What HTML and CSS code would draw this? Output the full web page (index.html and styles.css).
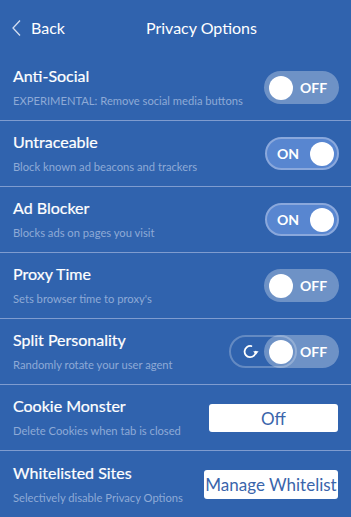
FILE: index.html
```html
<!DOCTYPE html>
<html>
<head>
<meta charset="utf-8">
<link rel="stylesheet" href="styles.css">
</head>
<body>
<div class="page">
  <header class="header">
    <svg class="chevron" width="9" height="16" viewBox="0 0 9 16"><polyline points="8,0.5 1,8 8,15.5" fill="none" stroke="#d3def0" stroke-width="1.3"/></svg>
    <span class="back">Back</span>
    <span class="header-title">Privacy Options</span>
  </header>

  <div class="row">
    <div class="info">
      <div class="title">Anti-Social</div>
      <div class="sub">EXPERIMENTAL: Remove social media buttons</div>
    </div>
    <div class="toggle off"><span class="knob"></span><span class="label">OFF</span></div>
  </div>

  <div class="row">
    <div class="info">
      <div class="title">Untraceable</div>
      <div class="sub">Block known ad beacons and trackers</div>
    </div>
    <div class="toggle on"><span class="label">ON</span><span class="knob"></span></div>
  </div>

  <div class="row">
    <div class="info">
      <div class="title">Ad Blocker</div>
      <div class="sub">Blocks ads on pages you visit</div>
    </div>
    <div class="toggle on"><span class="label">ON</span><span class="knob"></span></div>
  </div>

  <div class="row">
    <div class="info">
      <div class="title">Proxy Time</div>
      <div class="sub">Sets browser time to proxy's</div>
    </div>
    <div class="toggle off"><span class="knob"></span><span class="label">OFF</span></div>
  </div>

  <div class="row">
    <div class="info">
      <div class="title">Split Personality</div>
      <div class="sub">Randomly rotate your user agent</div>
    </div>
    <div class="toggle off split">
      <span class="split-ring">
        <svg class="rotate" width="16" height="15" viewBox="0 0 16 15">
          <path d="M8.4 2.1 A5.6 5.6 0 1 0 12.8 7.6" fill="none" stroke="#fff" stroke-width="1.8" stroke-linecap="round"/>
          <polygon points="10.2,7.2 15.6,7.2 12.9,10.8" fill="#fff"/>
        </svg>
      </span>
      <span class="knob"></span><span class="label">OFF</span>
    </div>
  </div>

  <div class="row">
    <div class="info">
      <div class="title">Cookie Monster</div>
      <div class="sub">Delete Cookies when tab is closed</div>
    </div>
    <button class="btn btn-off">Off</button>
  </div>

  <div class="row last">
    <div class="info">
      <div class="title">Whitelisted Sites</div>
      <div class="sub">Selectively disable Privacy Options</div>
    </div>
    <button class="btn btn-manage">Manage Whitelist</button>
  </div>
</div>
</body>
</html>
```

FILE: styles.css
```css
html, body {
  margin: 0;
  padding: 0;
  background: #3063ae;
}
body {
  font-family: Lato, "Open Sans", sans-serif;
  color: #fff;
  width: 351px;
  height: 517px;
  overflow: hidden;
}
.page {
  display: flex;
  flex-direction: column;
}
.header {
  height: 55px;
  display: flex;
  align-items: center;
  padding-left: 12px;
  font-size: 16px;
  line-height: 20px;
}
.chevron {
  display: block;
}
.back {
  margin-left: 10px;
}
.header-title {
  margin-left: 81px;
}
.row {
  height: 65px;
  border-bottom: 1px solid #7f9ccf;
  display: flex;
  align-items: center;
  padding: 0 12px 0 13px;
}
.row.last {
  border-bottom: none;
  height: 66px;
}
.info {
  flex: 1;
  display: flex;
  flex-direction: column;
  padding-bottom: 1px;
}
.title {
  font-size: 16px;
  line-height: 20px;
  -webkit-text-stroke: 0.2px #fff;
}
.sub {
  font-size: 11.2px;
  line-height: 14px;
  margin-top: 8px;
  color: #8eaad6;
}
.toggle {
  position: relative;
  box-sizing: border-box;
  width: 75px;
  height: 33px;
  border-radius: 17px;
  display: flex;
  align-items: center;
  font-size: 14px;
  font-weight: 700;
  line-height: 16px;
}
.toggle .knob {
  width: 24px;
  height: 24px;
  border-radius: 50%;
  background: #fff;
  flex: none;
}
.toggle.off {
  background: rgba(255, 255, 255, 0.3);
  padding-left: 5px;
}
.toggle.off .label {
  margin-left: 7px;
}
.toggle.on {
  width: 74px;
  background: #5886d0;
  border: 2px solid #8aa8dc;
  padding: 0 3px 0 10px;
  justify-content: space-between;
}
.split-ring {
  position: absolute;
  left: -35px;
  top: 0;
  width: 68px;
  height: 33px;
  box-sizing: border-box;
  border: 2px solid rgba(255, 255, 255, 0.25);
  border-radius: 17px;
  display: flex;
  align-items: center;
  padding-left: 12px;
}
.rotate {
  display: block;
}
.btn {
  box-sizing: border-box;
  background: #fff;
  border: none;
  border-radius: 3px;
  font-family: Lato, "Open Sans", sans-serif;
  font-size: 17px;
  color: #3a65ab;
  padding: 0;
  margin: 0;
}
.btn-off {
  width: 129px;
  height: 28px;
  margin-right: 1px;
  margin-top: 1px;
}
.btn-manage {
  width: 134px;
  height: 29px;
  margin-right: 1px;
  margin-top: 1px;
}
```
